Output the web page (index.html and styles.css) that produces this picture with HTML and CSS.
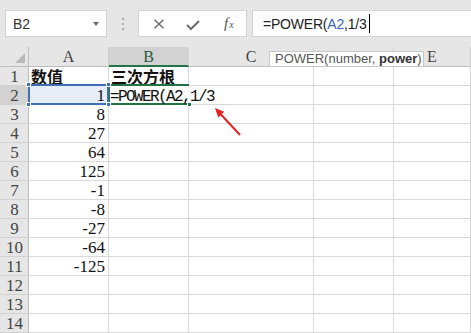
FILE: index.html
```html
<!DOCTYPE html>
<html>
<head>
<meta charset="utf-8">
<link rel="stylesheet" href="styles.css">
</head>
<body>
<div class="page">
  <div class="toolbar">
    <div class="namebox"><span class="nb-text">B2</span><span class="nb-caret"></span></div>
    <div class="grip"><i></i><i></i><i></i></div>
    <div class="fbuttons">
      <svg class="ic ic-x" width="12" height="10" viewBox="0 0 12 10"><path d="M1.5 0.8 L10.5 9.2 M10.5 0.8 L1.5 9.2" stroke="#6b6b6b" stroke-width="1.5" fill="none"/></svg>
      <svg class="ic ic-ok" width="14" height="10" viewBox="0 0 14 10"><path d="M1 5 L5 9 L13 1" stroke="#6b6b6b" stroke-width="2" fill="none"/></svg>
      <span class="fx"><span class="fx-f">f</span><span class="fx-x">x</span></span>
    </div>
    <div class="finput"><span>=POWER(</span><span class="ref">A2</span><span>,1/3</span><span class="cursor"></span></div>
  </div>
  <div class="sheet">
    <div class="corner"><span class="tri"></span></div>
    <div class="ch">A</div>
    <div class="ch ch-sel">B</div>
    <div class="ch">C</div>
    <div class="ch">D</div>
    <div class="ch">E</div>

    <div class="rh">1</div><div class="c cjk">数值</div><div class="c cjk">三次方根</div><div class="c"></div><div class="c"></div><div class="c"></div>
    <div class="rh rh-sel">2</div>
    <div class="c num a2">1<span class="blue-frame"><b class="h tl"></b><b class="h tr"></b><b class="h bl"></b><b class="h br"></b></span></div>
    <div class="c b2"><span class="edit">=POWER(A2,1/3</span><span class="green-frame"></span><b class="fill"></b></div>
    <div class="c"></div><div class="c"></div><div class="c"></div>
    <div class="rh">3</div><div class="c num">8</div><div class="c"></div><div class="c"></div><div class="c"></div><div class="c"></div>
    <div class="rh">4</div><div class="c num">27</div><div class="c"></div><div class="c"></div><div class="c"></div><div class="c"></div>
    <div class="rh">5</div><div class="c num">64</div><div class="c"></div><div class="c"></div><div class="c"></div><div class="c"></div>
    <div class="rh">6</div><div class="c num">125</div><div class="c"></div><div class="c"></div><div class="c"></div><div class="c"></div>
    <div class="rh">7</div><div class="c num">-1</div><div class="c"></div><div class="c"></div><div class="c"></div><div class="c"></div>
    <div class="rh">8</div><div class="c num">-8</div><div class="c"></div><div class="c"></div><div class="c"></div><div class="c"></div>
    <div class="rh">9</div><div class="c num">-27</div><div class="c"></div><div class="c"></div><div class="c"></div><div class="c"></div>
    <div class="rh">10</div><div class="c num">-64</div><div class="c"></div><div class="c"></div><div class="c"></div><div class="c"></div>
    <div class="rh">11</div><div class="c num">-125</div><div class="c"></div><div class="c"></div><div class="c"></div><div class="c"></div>
    <div class="rh">12</div><div class="c"></div><div class="c"></div><div class="c"></div><div class="c"></div><div class="c"></div>
    <div class="rh">13</div><div class="c"></div><div class="c"></div><div class="c"></div><div class="c"></div><div class="c"></div>
    <div class="rh">14</div><div class="c"></div><div class="c"></div><div class="c"></div><div class="c"></div><div class="c"></div>
  </div>
  <div class="tooltip">POWER(number, <b>power</b>)</div>
  <svg class="arrow" width="471" height="333" viewBox="0 0 471 333">
    <line x1="240" y1="135" x2="220.5" y2="114" stroke="#e32322" stroke-width="2"/>
    <polygon points="215,108 224.2,111.8 218.2,117.4" fill="#e32322"/>
  </svg>
</div>
</body>
</html>
```

FILE: styles.css
```css
html, body {
  margin: 0;
  padding: 0;
}
body {
  width: 471px;
  height: 333px;
  overflow: hidden;
  background: #e6e6e6;
  font-family: "Liberation Sans", Arial, sans-serif;
}
.page {
  position: relative;
  width: 471px;
  height: 333px;
}
.toolbar {
  height: 47px;
  box-sizing: border-box;
  padding: 10px 0 0 5px;
  display: flex;
  align-items: flex-start;
  background: #e6e6e6;
}
.namebox {
  width: 102px;
  height: 27px;
  box-sizing: border-box;
  background: #fff;
  border: 1px solid #d4d4d4;
  display: flex;
  align-items: center;
  justify-content: space-between;
  padding: 0 7px 0 7px;
}
.nb-text {
  font-size: 14px;
  color: #333;
}
.nb-caret {
  width: 0;
  height: 0;
  border-left: 3.5px solid transparent;
  border-right: 3.5px solid transparent;
  border-top: 4px solid #6a6a6a;
  margin-top: 1px;
}
.grip {
  width: 31px;
  height: 27px;
  display: flex;
  flex-direction: column;
  align-items: center;
  justify-content: center;
  gap: 3px;
}
.grip i {
  display: block;
  width: 2px;
  height: 2px;
  background: #aaaaaa;
}
.fbuttons {
  width: 109px;
  height: 27px;
  box-sizing: border-box;
  background: #fff;
  border: 1px solid #d4d4d4;
  display: flex;
  align-items: center;
  padding-left: 14px;
}
.ic-x {
  margin-top: 1px;
}
.ic-ok {
  margin-left: 21px;
  margin-top: 2px;
}
.fx {
  margin-left: 24px;
  font-family: "Liberation Serif", serif;
  font-style: italic;
  color: #555;
  display: flex;
  align-items: baseline;
}
.fx-f {
  font-size: 15px;
}
.fx-x {
  font-size: 10px;
  margin-left: 1px;
}
.finput {
  margin-left: 5px;
  flex: 1;
  height: 27px;
  box-sizing: border-box;
  background: #fff;
  border: 1px solid #d4d4d4;
  border-right: none;
  display: flex;
  align-items: center;
  padding-left: 10px;
  font-size: 14px;
  letter-spacing: -0.2px;
  color: #222;
}
.finput .ref {
  color: #3a66b4;
}
.cursor {
  display: block;
  width: 1px;
  height: 19px;
  background: #000;
  margin-left: 2px;
}
.sheet {
  display: grid;
  grid-template-columns: 29px 80px 80px 125px 80px 1fr;
  grid-template-rows: 20px repeat(14, 19px);
  background: #fff;
}
.sheet > div {
  box-sizing: border-box;
  border-right: 1px solid #d9d9d9;
  border-bottom: 1px solid #d9d9d9;
}
.corner {
  position: relative;
  background: #e6e6e6;
  border-right-color: #bdbdbd !important;
  border-bottom-color: #bdbdbd !important;
}
.tri {
  position: absolute;
  right: 3px;
  bottom: 3px;
  width: 0;
  height: 0;
  border-left: 10px solid transparent;
  border-bottom: 10px solid #b8b8b8;
}
.ch {
  background: #e6e6e6;
  border-right-color: #cfcfcf !important;
  border-bottom-color: #bdbdbd !important;
  font-family: "Liberation Serif", serif;
  font-size: 16px;
  color: #444;
  text-align: center;
  line-height: 20px;
}
.ch-sel {
  background: #d2d2d2;
  color: #2f5a3d;
  border-bottom: 2px solid #217346 !important;
}
.rh {
  background: #e6e6e6;
  border-right-color: #bdbdbd !important;
  border-bottom-color: #d2d2d2 !important;
  font-family: "Liberation Serif", serif;
  font-size: 17px;
  color: #444;
  text-align: center;
  line-height: 19px;
  padding-left: 1px;
}
.rh-sel {
  background: #d2d2d2;
}
.c {
  position: relative;
  font-family: "Liberation Serif", serif;
  font-size: 17px;
  color: #111;
  line-height: 19px;
  white-space: nowrap;
}
.cjk {
  font-family: "Noto Sans CJK SC", sans-serif;
  font-weight: 700;
  font-size: 16px;
  letter-spacing: 0;
  line-height: 18px;
  padding-left: 2px;
}
.num {
  text-align: right;
  padding-right: 3px;
}
.a2 {
  background: #e8eef8;
}
.blue-frame {
  position: absolute;
  top: -2px;
  left: -1px;
  right: -1px;
  bottom: -1px;
  border: 2px solid #3c6fb6;
  z-index: 3;
}
.h {
  position: absolute;
  width: 5px;
  height: 5px;
  box-sizing: border-box;
  background: #3c6fb6;
  border: 1px solid #fff;
}
.tl { left: -4px; top: -4px; }
.tr { right: -4px; top: -4px; }
.bl { left: -4px; bottom: -4px; }
.br { right: -4px; bottom: -4px; }
.b2 {
  border-right-color: #fff !important;
  z-index: 2;
  overflow: visible;
}
.edit {
  position: relative;
  z-index: 4;
  padding-left: 1px;
  font-family: "Liberation Mono", monospace;
  font-size: 16px;
  letter-spacing: -1.6px;
}
.green-frame {
  position: absolute;
  top: -2px;
  left: -1px;
  right: -1px;
  bottom: -1px;
  border: 2px solid #217346;
  border-right: none;
  z-index: 2;
}
.fill {
  position: absolute;
  right: -4px;
  bottom: -3px;
  width: 5px;
  height: 5px;
  background: #217346;
  border: 1px solid #fff;
  box-sizing: border-box;
  z-index: 5;
}
.tooltip {
  position: absolute;
  left: 269px;
  top: 51px;
  width: 155px;
  height: 16px;
  box-sizing: border-box;
  background: #fff;
  border: 1px solid #c8c8c8;
  font-size: 13px;
  line-height: 14px;
  color: #555;
  padding-left: 5px;
  white-space: nowrap;
  z-index: 10;
}
.tooltip b {
  color: #333;
}
.arrow {
  position: absolute;
  left: 0;
  top: 0;
  pointer-events: none;
  z-index: 11;
}
```
